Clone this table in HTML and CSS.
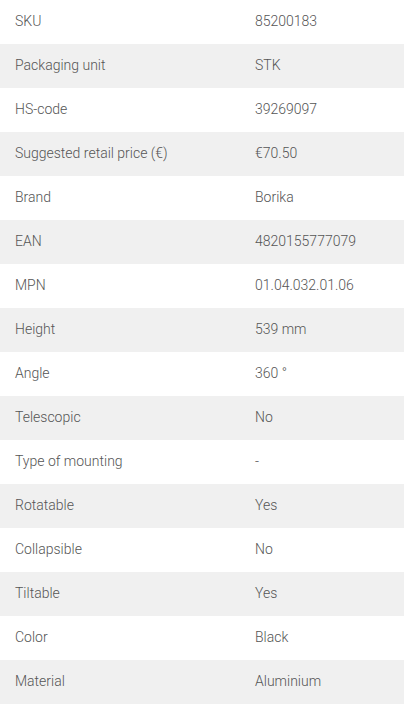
FILE: index.html
```html
<!DOCTYPE html>
<html>
<head>
<meta charset="utf-8">
<link rel="stylesheet" href="styles.css">
</head>
<body>
<div class="specs">
  <div class="row"><div class="label">SKU</div><div class="value">85200183</div></div>
  <div class="row"><div class="label">Packaging unit</div><div class="value">STK</div></div>
  <div class="row"><div class="label">HS-code</div><div class="value">39269097</div></div>
  <div class="row"><div class="label">Suggested retail price (€)</div><div class="value">€70.50</div></div>
  <div class="row"><div class="label">Brand</div><div class="value">Borika</div></div>
  <div class="row"><div class="label">EAN</div><div class="value">4820155777079</div></div>
  <div class="row"><div class="label">MPN</div><div class="value">01.04.032.01.06</div></div>
  <div class="row"><div class="label">Height</div><div class="value">539 mm</div></div>
  <div class="row"><div class="label">Angle</div><div class="value">360 °</div></div>
  <div class="row"><div class="label">Telescopic</div><div class="value">No</div></div>
  <div class="row"><div class="label">Type of mounting</div><div class="value">-</div></div>
  <div class="row"><div class="label">Rotatable</div><div class="value">Yes</div></div>
  <div class="row"><div class="label">Collapsible</div><div class="value">No</div></div>
  <div class="row"><div class="label">Tiltable</div><div class="value">Yes</div></div>
  <div class="row"><div class="label">Color</div><div class="value">Black</div></div>
  <div class="row"><div class="label">Material</div><div class="value">Aluminium</div></div>
</div>
</body>
</html>
```
FILE: styles.css
```css
html, body {
  margin: 0;
  padding: 0;
  background: #ffffff;
}
.specs {
  width: 404px;
  font-family: Roboto, "Liberation Sans", sans-serif;
  font-weight: 300;
  font-size: 14px;
  color: #555555;
}
.row {
  display: flex;
  align-items: center;
  height: 44px;
  padding-bottom: 2px;
  box-sizing: border-box;
}
.row:nth-child(even) {
  background: #f0f0f0;
}
.label {
  width: 240px;
  padding-left: 15px;
  box-sizing: border-box;
  line-height: 20px;
}
.value {
  padding-left: 15px;
  line-height: 20px;
}
```
